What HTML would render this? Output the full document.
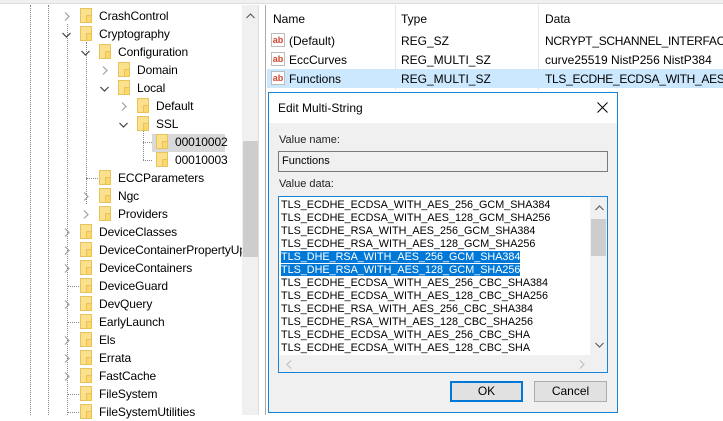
<!DOCTYPE html>
<html><head><meta charset="utf-8"><style>
*{margin:0;padding:0;box-sizing:border-box}
body{width:723px;height:415px;overflow:hidden;background:#fff;font-family:"Liberation Sans",sans-serif;font-size:12px;color:#000;position:relative}
.a{position:absolute;white-space:nowrap}
.t{position:absolute;line-height:18px;height:18px;white-space:nowrap;font-size:12px;letter-spacing:-0.1px}
.f{position:absolute;width:12px;height:15px;background:#fbe08e;border:1px solid #e8c25a}
.f:after{content:"";position:absolute;right:-1px;bottom:-1px;width:4px;height:6px;border:1px solid #e8c25a;background:#fcd86b}
.v{position:absolute;border-left:1px dotted #888;width:0}
.h{position:absolute;border-top:1px dotted #888;height:0}
.r{position:absolute;width:6px;height:9px}
.d{position:absolute;width:9px;height:6px}
.ab{position:absolute;width:14px;height:14px;border:1px solid #bbb;background:#fff;font-size:9px;font-weight:bold;color:#d0452c;line-height:12px;text-align:center}
.ml{line-height:13px;font-size:10.8px;white-space:pre}
</style></head><body>
<svg width="0" height="0" style="position:absolute"><defs>
<symbol id="cr" viewBox="0 0 6 9"><path d="M1 0.5L5 4.5L1 8.5" fill="none" stroke="#a0a0a0" stroke-width="1.2"/></symbol>
<symbol id="cd" viewBox="0 0 9 6"><path d="M0.5 1L4.5 5L8.5 1" fill="none" stroke="#404040" stroke-width="1.2"/></symbol>
</defs></svg>
<div class="a" style="left:0;top:0;width:723px;height:4px;background:#f0f0f0;border-bottom:1px solid #ddd"></div>
<div class="v" style="left:30px;top:5px;height:410px"></div>
<div class="v" style="left:48px;top:5px;height:410px"></div>
<div class="v" style="left:67px;top:24px;height:391px"></div>
<div class="v" style="left:86px;top:42px;height:162px"></div>
<div class="v" style="left:143px;top:130px;height:30px"></div>
<div class="h" style="left:143px;top:142px;width:9px"></div>
<div class="h" style="left:143px;top:160px;width:9px"></div>
<div class="h" style="left:86px;top:178px;width:12px"></div>
<div class="h" style="left:67px;top:286px;width:12px"></div>
<div class="h" style="left:67px;top:322px;width:12px"></div>
<div class="h" style="left:67px;top:394px;width:12px"></div>
<div class="h" style="left:67px;top:412px;width:12px"></div>
<div class="a" style="left:152px;top:134px;width:73px;height:18px;background:#d9d9d9"></div>

<svg class="r" style="left:64px;top:12px"><use href="#cr"/></svg><div class="f" style="left:80px;top:8px"></div><div class="t" style="left:99px;top:7px">CrashControl</div>
<svg class="d" style="left:62px;top:32px"><use href="#cd"/></svg><div class="f" style="left:80px;top:26px"></div><div class="t" style="left:99px;top:25px">Cryptography</div>
<svg class="d" style="left:81px;top:50px"><use href="#cd"/></svg><div class="f" style="left:99px;top:44px"></div><div class="t" style="left:118px;top:43px">Configuration</div>
<svg class="r" style="left:102px;top:66px"><use href="#cr"/></svg><div class="f" style="left:118px;top:62px"></div><div class="t" style="left:137px;top:61px">Domain</div>
<svg class="d" style="left:100px;top:86px"><use href="#cd"/></svg><div class="f" style="left:118px;top:80px"></div><div class="t" style="left:137px;top:79px">Local</div>
<svg class="r" style="left:121px;top:102px"><use href="#cr"/></svg><div class="f" style="left:137px;top:98px"></div><div class="t" style="left:156px;top:97px">Default</div>
<svg class="d" style="left:119px;top:122px"><use href="#cd"/></svg><div class="f" style="left:137px;top:116px"></div><div class="t" style="left:156px;top:115px">SSL</div>
<div class="f" style="left:156px;top:134px"></div><div class="t" style="left:175px;top:133px">00010002</div>
<div class="f" style="left:156px;top:152px"></div><div class="t" style="left:175px;top:151px">00010003</div>
<div class="f" style="left:99px;top:170px"></div><div class="t" style="left:118px;top:169px">ECCParameters</div>
<svg class="r" style="left:83px;top:192px"><use href="#cr"/></svg><div class="f" style="left:99px;top:188px"></div><div class="t" style="left:118px;top:187px">Ngc</div>
<svg class="r" style="left:83px;top:210px"><use href="#cr"/></svg><div class="f" style="left:99px;top:206px"></div><div class="t" style="left:118px;top:205px">Providers</div>
<svg class="r" style="left:64px;top:228px"><use href="#cr"/></svg><div class="f" style="left:80px;top:224px"></div><div class="t" style="left:99px;top:223px">DeviceClasses</div>
<svg class="r" style="left:64px;top:246px"><use href="#cr"/></svg><div class="f" style="left:80px;top:242px"></div><div class="t" style="left:99px;top:241px">DeviceContainerPropertyUp</div>
<svg class="r" style="left:64px;top:264px"><use href="#cr"/></svg><div class="f" style="left:80px;top:260px"></div><div class="t" style="left:99px;top:259px">DeviceContainers</div>
<div class="f" style="left:80px;top:278px"></div><div class="t" style="left:99px;top:277px">DeviceGuard</div>
<svg class="r" style="left:64px;top:300px"><use href="#cr"/></svg><div class="f" style="left:80px;top:296px"></div><div class="t" style="left:99px;top:295px">DevQuery</div>
<div class="f" style="left:80px;top:314px"></div><div class="t" style="left:99px;top:313px">EarlyLaunch</div>
<svg class="r" style="left:64px;top:336px"><use href="#cr"/></svg><div class="f" style="left:80px;top:332px"></div><div class="t" style="left:99px;top:331px">Els</div>
<svg class="r" style="left:64px;top:354px"><use href="#cr"/></svg><div class="f" style="left:80px;top:350px"></div><div class="t" style="left:99px;top:349px">Errata</div>
<svg class="r" style="left:64px;top:372px"><use href="#cr"/></svg><div class="f" style="left:80px;top:368px"></div><div class="t" style="left:99px;top:367px">FastCache</div>
<div class="f" style="left:80px;top:386px"></div><div class="t" style="left:99px;top:385px">FileSystem</div>
<div class="f" style="left:80px;top:404px"></div><div class="t" style="left:99px;top:403px">FileSystemUtilities</div>

<div class="a" style="left:242px;top:5px;width:16px;height:410px;background:#f0f0f0"></div>
<svg class="a" style="left:246px;top:13px" width="9" height="6"><path d="M0.5 5L4.5 1L8.5 5" fill="none" stroke="#606060" stroke-width="1.2"/></svg>
<div class="a" style="left:243px;top:141px;width:15px;height:116px;background:#cdcdcd"></div>
<div class="a" style="left:258px;top:5px;width:1px;height:410px;background:#ddd"></div>
<div class="a" style="left:265px;top:5px;width:1px;height:410px;background:#aaa"></div>

<div class="a" style="left:395px;top:5px;width:1px;height:85px;background:#e5e5e5"></div>
<div class="a" style="left:538px;top:5px;width:1px;height:85px;background:#e5e5e5"></div>
<div class="a" style="left:273px;top:12px">Name</div>
<div class="a" style="left:401px;top:12px">Type</div>
<div class="a" style="left:545px;top:12px">Data</div>
<div class="a" style="left:267px;top:69px;width:456px;height:19px;background:#cce8ff"></div>
<div class="ab" style="left:271px;top:33px">ab</div><div class="a" style="left:289px;top:34px">(Default)</div><div class="a" style="left:401px;top:34px">REG_SZ</div><div class="a" style="left:545px;top:34px;letter-spacing:-0.3px">NCRYPT_SCHANNEL_INTERFACE</div>
<div class="ab" style="left:271px;top:52px">ab</div><div class="a" style="left:289px;top:53px">EccCurves</div><div class="a" style="left:401px;top:53px">REG_MULTI_SZ</div><div class="a" style="left:545px;top:53px">curve25519 NistP256 NistP384</div>
<div class="ab" style="left:271px;top:71px">ab</div><div class="a" style="left:289px;top:72px">Functions</div><div class="a" style="left:401px;top:72px">REG_MULTI_SZ</div><div class="a" style="left:545px;top:72px;letter-spacing:-0.3px">TLS_ECDHE_ECDSA_WITH_AES_256</div>

<div class="a" style="left:268px;top:92px;width:350px;height:321px;border:1px solid #1883d7;background:#f0f0f0">
 <div class="a" style="left:0;top:0;width:348px;height:30px;background:#fff"></div>
 <div class="a" style="left:9px;top:8px;font-size:12px">Edit Multi-String</div>
 <svg class="a" style="left:328px;top:9px" width="11" height="11"><path d="M0.5 0.5L10.5 10.5M10.5 0.5L0.5 10.5" stroke="#000" stroke-width="1"/></svg>
 <div class="a" style="left:10px;top:41px;font-size:11px;color:#222">Value name:</div>
 <div class="a" style="left:9px;top:58px;width:330px;height:21px;border:1px solid #7a7a7a;background:#f0f0f0;padding:3px 3px;font-size:11px">Functions</div>
 <div class="a" style="left:10px;top:85px;font-size:11px;color:#222">Value data:</div>
 <div class="a" style="left:9px;top:103px;width:330px;height:177px;border:1px solid #1883d7;background:#fff">
  <div class="a ml" style="left:2px;top:2px;width:300px">TLS_ECDHE_ECDSA_WITH_AES_256_GCM_SHA384
TLS_ECDHE_ECDSA_WITH_AES_128_GCM_SHA256
TLS_ECDHE_RSA_WITH_AES_256_GCM_SHA384
TLS_ECDHE_RSA_WITH_AES_128_GCM_SHA256
<span style="background:#0078d7;color:#fff">TLS_DHE_RSA_WITH_AES_256_GCM_SHA384</span>
<span style="background:#0078d7;color:#fff">TLS_DHE_RSA_WITH_AES_128_GCM_SHA256</span>
TLS_ECDHE_ECDSA_WITH_AES_256_CBC_SHA384
TLS_ECDHE_ECDSA_WITH_AES_128_CBC_SHA256
TLS_ECDHE_RSA_WITH_AES_256_CBC_SHA384
TLS_ECDHE_RSA_WITH_AES_128_CBC_SHA256
TLS_ECDHE_ECDSA_WITH_AES_256_CBC_SHA
TLS_ECDHE_ECDSA_WITH_AES_128_CBC_SHA</div>
  <div class="a" style="left:311px;top:0;width:17px;height:158px;background:#f0f0f0"></div>
  <div class="a" style="left:312px;top:22px;width:15px;height:37px;background:#cdcdcd"></div>
  <svg class="a" style="left:316px;top:8px" width="9" height="6"><path d="M0.5 5L4.5 1L8.5 5" fill="none" stroke="#606060" stroke-width="1.2"/></svg>
  <svg class="a" style="left:316px;top:145px" width="9" height="6"><path d="M0.5 1L4.5 5L8.5 1" fill="none" stroke="#606060" stroke-width="1.2"/></svg>
  <div class="a" style="left:0;top:158px;width:328px;height:17px;background:#f0f0f0"></div>
  <svg class="a" style="left:7px;top:163px" width="6" height="9"><path d="M5 0.5L1 4.5L5 8.5" fill="none" stroke="#c0c0c0" stroke-width="1.2"/></svg>
  <svg class="a" style="left:300px;top:163px" width="6" height="9"><path d="M1 0.5L5 4.5L1 8.5" fill="none" stroke="#c0c0c0" stroke-width="1.2"/></svg>
 </div>
 <div class="a" style="left:181px;top:288px;width:73px;height:21px;border:2px solid #0078d7;background:#e1e1e1;text-align:center;line-height:17px">OK</div>
 <div class="a" style="left:265px;top:288px;width:73px;height:21px;border:1px solid #adadad;background:#e1e1e1;text-align:center;line-height:19px">Cancel</div>
</div>
</body></html>
